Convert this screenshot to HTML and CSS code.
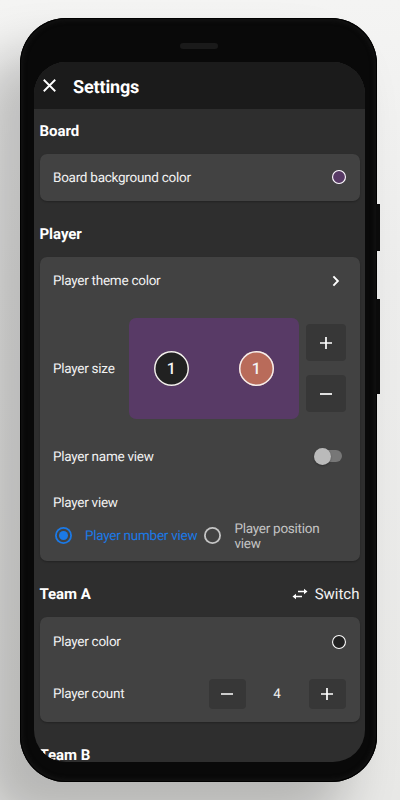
FILE: index.html
```html
<!DOCTYPE html>
<html lang="en">
<head>
<meta charset="utf-8">
<title>Settings</title>
<link rel="stylesheet" href="styles.css">
</head>
<body>
<div class="phone">
  <span class="side-button power"></span>
  <span class="side-button volume"></span>
  <div class="bezel"><span class="speaker"></span></div>
  <div class="screen">
    <header class="appbar">
      <svg class="close" viewBox="0 0 12 12"><path d="M.7.7l10.6 10.6M11.3.7L.7 11.3"/></svg>
      <h1>Settings</h1>
    </header>
    <main>
      <div class="heading first"><h2>Board</h2></div>
      <section class="card">
        <div class="row board-row"><span class="label">Board background color</span><span class="swatch purple"></span></div>
      </section>
      <div class="heading"><h2>Player</h2></div>
      <section class="card player-card">
        <div class="row theme-row"><span>Player theme color</span>
          <svg class="chevron" viewBox="0 0 8 12"><path d="M1.4 1.4L5.9 6l-4.500 4.600"/></svg>
        </div>
        <div class="row size-row">
          <span class="label size-label">Player size</span>
          <div class="preview"><span class="token dark">1</span><span class="token coral">1</span></div>
          <div class="size-buttons">
            <button class="tall"><svg class="sign" viewBox="0 0 12 12"><path d="M0 6h12M6 0v12"/></svg></button>
            <button class="tall"><svg class="sign" viewBox="0 0 12 12"><path d="M0 6h12"/></svg></button>
          </div>
        </div>
        <div class="row name-row"><span class="label">Player name view</span><span class="toggle"><span class="knob"></span></span></div>
        <div class="row view-row"><span class="label">Player view</span></div>
        <div class="radios">
          <span class="radio selected"></span><span class="radio-label active">Player number view</span>
          <span class="radio"></span><span class="radio-label">Player position view</span>
        </div>
      </section>
      <div class="heading"><h2>Team A</h2>
        <div class="switch">
          <svg viewBox="0 0 16 12"><path d="M6 3.500h7M3 8.500h7" /><path class="tip" d="M12 .7L15.500 3.500 12 6.300zM4 5.700L.5 8.500 4 11.300z"/></svg>
          <span>Switch</span>
        </div>
      </div>
      <section class="card team-card">
        <div class="row color-row"><span>Player color</span><span class="swatch black"></span></div>
        <div class="row count-row"><span>Player count</span>
          <div class="stepper">
            <button><svg class="sign" viewBox="0 0 12 12"><path d="M0 6h12"/></svg></button>
            <span class="count">4</span>
            <button><svg class="sign" viewBox="0 0 12 12"><path d="M0 6h12M6 0v12"/></svg></button>
          </div>
        </div>
      </section>
      <div class="heading"><h2>Team B</h2></div>
    </main>
  </div>
</div>
</body>
</html>
```
FILE: styles.css
```css
* { box-sizing: border-box; }
body {
  margin: 0;
  height: 800px;
  padding: 18px 23px 18px 20px;
  overflow: hidden;
  background: linear-gradient(180deg, #f4f4f3 0, #ededec 35%, #e8e8e6 100%);
  font-family: Roboto, sans-serif;
  font-size: 13.5px;
  letter-spacing: -.26px;
  text-rendering: geometricPrecision;
  color: #f2f2f2;
}
.phone {
  position: relative;
  width: 357px;
  height: 764px;
  padding: 0 12px 20px 14px;
  border-radius: 46px;
  background: #090909;
  box-shadow: inset 0 0 0 1px #000, inset 0 0 5px 2px #161616, -34px 38px 50px 4px rgba(0, 0, 0, .21);
}
.side-button {
  position: absolute;
  right: -3px;
  width: 4px;
  background: #0b0b0b;
}
.power { top: 186px; height: 47px; }
.volume { top: 281px; height: 95px; }
.bezel {
  height: 44px;
  padding: 25px 2px 0 0;
  display: flex;
  justify-content: center;
}
.speaker {
  width: 38px;
  height: 6px;
  border-radius: 3px;
  background: #1a1a1a;
}
.screen {
  height: 700px;
  overflow: hidden;
  border-radius: 32px;
  background: #2e2e2e;
}
.appbar {
  height: 47px;
  display: flex;
  align-items: center;
  gap: 17px;
  padding: 4px 0 0 9px;
  background: #1b1b1b;
}
.close { width: 13px; height: 13px; margin-top: -4px; }
svg { display: block; fill: none; stroke: #fff; stroke-width: 1.7; }
h1, h2 { margin: 0; color: #fff; font-weight: 700; }
h1 { font-size: 18px; line-height: 24px; letter-spacing: -.15px; }
h2 { font-size: 15px; line-height: 20px; letter-spacing: -.05px; }
main { padding: 0 5.500px; }
.heading {
  height: 56px;
  padding-top: 23px;
  display: flex;
  align-items: flex-start;
  justify-content: space-between;
}
.heading.first { height: 44.500px; padding-top: 12px; }
.card {
  border-radius: 7px;
  background: #424242;
  box-shadow: 0 1px 2px rgba(0, 0, 0, .25);
}
.row {
  display: flex;
  align-items: center;
  justify-content: space-between;
  padding: 0 14px 0 13.500px;
}
.label { padding-top: 1.500px; }
.board-row { height: 47px; }
.theme-row { height: 48px; }
.player-card { height: 304.500px; }
.swatch {
  width: 14px;
  height: 14px;
  border-radius: 50%;
  box-shadow: inset 0 0 0 1.100px #fff;
}
.purple { background: #583a66; }
.black { background: #212121; }
.chevron { width: 8px; height: 12px; margin-right: 6px; stroke-width: 1.9; }
.size-row { height: 127px; }
.size-label { width: 76px; }
.preview {
  width: 170px;
  height: 101px;
  border-radius: 7px;
  display: flex;
  align-items: center;
  justify-content: space-around;
  background: #583a66;
}
.token {
  width: 35px;
  height: 35px;
  border-radius: 50%;
  box-shadow: inset 0 0 0 1.500px #f4eeee;
  display: grid;
  place-items: center;
  font-size: 16px;
  font-weight: 500;
}
.dark { background: #212121; }
.coral { background: #b96b5a; }
.size-buttons { display: grid; gap: 14px; margin-left: 7px; }
button {
  width: 37px;
  height: 30px;
  padding: 0;
  border: 0;
  border-radius: 4px;
  display: grid;
  place-items: center;
  background: #373737;
}
.tall { width: 40px; height: 37px; }
.sign { width: 12px; height: 12px; }
.name-row { height: 49px; }
.toggle {
  width: 26px;
  height: 12px;
  margin-right: 4px;
  border-radius: 6px;
  display: flex;
  align-items: center;
  background: #777;
}
.knob {
  width: 17px;
  height: 17px;
  margin-left: -2px;
  flex: none;
  border-radius: 50%;
  background: #bababa;
  box-shadow: 0 1px 2px rgba(0, 0, 0, .3);
}
.view-row { height: 43px; }
.radios {
  height: 24px;
  padding-left: 15px;
  display: flex;
  align-items: center;
  line-height: 15px;
  color: #c4c4c4;
}
.radio {
  width: 17px;
  height: 17px;
  flex: none;
  border-radius: 50%;
  box-shadow: inset 0 0 0 1.800px #c4c4c4;
  display: grid;
  place-items: center;
}
.radio.selected { box-shadow: inset 0 0 0 1.800px #1b79e6; }
.selected::after {
  content: "";
  width: 9px;
  height: 9px;
  border-radius: 50%;
  background: #1b79e6;
}
.radio-label { width: 106px; margin-left: 13.500px; padding-top: 2px; }
.radio-label.active { width: 119px; padding-top: 1.500px; color: #1b79e6; white-space: nowrap; }
.switch { display: flex; align-items: center; gap: 7px; font-size: 15px; line-height: 20px; letter-spacing: 0; }
.switch svg { width: 16px; height: 12px; }
.switch .tip { fill: #fff; stroke: none; }
.team-card { height: 104.500px; }
.color-row { height: 49px; }
.count-row { height: 55px; }
.stepper { display: flex; align-items: center; }
.count { width: 63px; text-align: center; }
```
